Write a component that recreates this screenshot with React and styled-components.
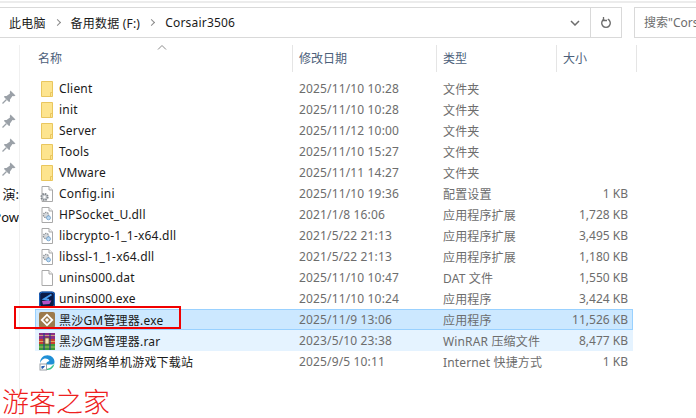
import React from "react";
import styled, { createGlobalStyle } from "styled-components";

const FILES = [
  { icon: "folder", name: "Client", date: "2025/11/10 10:28", type: "文件夹", size: "" },
  { icon: "folder", name: "init", date: "2025/11/10 10:28", type: "文件夹", size: "" },
  { icon: "folder", name: "Server", date: "2025/11/12 10:00", type: "文件夹", size: "" },
  { icon: "folder", name: "Tools", date: "2025/11/10 15:27", type: "文件夹", size: "" },
  { icon: "folder", name: "VMware", date: "2025/11/11 14:27", type: "文件夹", size: "" },
  { icon: "config", name: "Config.ini", date: "2025/11/10 19:36", type: "配置设置", size: "1 KB" },
  { icon: "dll", name: "HPSocket_U.dll", date: "2021/1/8 16:06", type: "应用程序扩展", size: "1,728 KB" },
  { icon: "dll", name: "libcrypto-1_1-x64.dll", date: "2021/5/22 21:13", type: "应用程序扩展", size: "3,495 KB" },
  { icon: "dll", name: "libssl-1_1-x64.dll", date: "2021/5/22 21:13", type: "应用程序扩展", size: "1,180 KB" },
  { icon: "page", name: "unins000.dat", date: "2025/11/10 10:47", type: "DAT 文件", size: "1,550 KB" },
  { icon: "unins", name: "unins000.exe", date: "2025/11/10 10:24", type: "应用程序", size: "3,424 KB" },
  { icon: "game", name: "黑沙GM管理器.exe", date: "2025/11/9 13:06", type: "应用程序", size: "11,526 KB", state: "selected" },
  { icon: "rar", name: "黑沙GM管理器.rar", date: "2023/5/10 23:38", type: "WinRAR 压缩文件", size: "8,477 KB", state: "hover" },
  { icon: "edge", name: "虚游网络单机游戏下载站", date: "2025/9/5 10:11", type: "Internet 快捷方式", size: "1 KB" },
];

const PageIcon = ({ children }) => (
  <svg width="16" height="16" viewBox="0 0 16 16">
    <path d="M3 .5h7l3.500 3.500v11.500h-10.500z" fill="#fff" stroke="#a9a9a9" />
    <path d="M10 .5v3.500h3.500" fill="#f2f2f2" stroke="#a9a9a9" />
    {children}
  </svg>
);

const FileIcon = ({ kind }) => {
  if (kind === "folder") {
    return (
      <svg width="16" height="16" viewBox="0 0 16 16">
        <path d="M2.500.5h11v15h-11z" fill="#fde48e" stroke="#e9c65e" />
        <path d="M11.500 15.500v-4h2" fill="none" stroke="#e9c65e" />
      </svg>
    );
  }
  if (kind === "page") return <PageIcon />;
  if (kind === "config") {
    return (
      <PageIcon>
        <circle cx="5.500" cy="11" r="3.200" fill="#c4c8cc" stroke="#7f8489" strokeWidth="1.800" strokeDasharray="1.500 1" />
        <circle cx="5.500" cy="11" r="1.200" fill="#fff" />
      </PageIcon>
    );
  }
  if (kind === "dll") {
    return (
      <PageIcon>
        <circle cx="7" cy="8" r="2.600" fill="#d5d8db" stroke="#8d9297" strokeWidth="1.300" strokeDasharray="1.400 .8" />
        <circle cx="9.500" cy="10.800" r="2" fill="#bcd9f2" stroke="#6d9fcb" strokeWidth=".8" />
      </PageIcon>
    );
  }
  if (kind === "unins") {
    return (
      <svg width="17" height="17" viewBox="0 0 16 16">
        <rect width="16" height="16" rx="3" fill="#10306e" />
        <rect x=".7" y=".7" width="14.600" height="14.600" rx="2.500" fill="#0b1c48" stroke="#1f6fd0" />
        <path d="M12.500 3 5 7.500l5 1" fill="none" stroke="#4a9ff0" strokeWidth="1.800" />
        <path d="M3 9.500 12.500 9l-2 3.500-6.500.500z" fill="#b452c8" />
      </svg>
    );
  }
  if (kind === "game") {
    return (
      <svg width="16" height="16" viewBox="0 0 16 16">
        <rect width="16" height="16" rx="2" fill="#9c7a4c" />
        <path d="M8 1.500 14.500 8 8 14.500 1.500 8z" fill="#fff" />
        <path d="M8 5 11 8 8 11 5 8z" fill="none" stroke="#9c7a4c" strokeWidth="1.300" />
      </svg>
    );
  }
  if (kind === "rar") {
    return (
      <svg width="16" height="17" viewBox="0 0 16 17">
        <rect x="0" y="0" width="16" height="6" fill="#8a2f86" />
        <rect x="0" y="6" width="16" height="5" fill="#c8402f" />
        <rect x="0" y="11" width="16" height="6" fill="#3c9a3a" />
        <path d="M0 2.500h16M0 8.500h16M0 14h16" stroke="#e8d070" strokeWidth=".7" />
        <path d="M5 0v17M11 0v17" stroke="#2a3f8c" strokeWidth="1.200" />
        <rect x="6" y="5" width="4" height="6" fill="#f4e6b8" stroke="#7a5a20" strokeWidth=".7" />
      </svg>
    );
  }
  return (
    <svg width="17" height="17" viewBox="0 0 16 16">
      <path d="M1 9C1 4 4 .8 8.500 .8c4 0 7 3 7 6.700 0 1.500-1 2.500-2.500 2.500H7c0-2 1.500-3 3.500-3.500C9 4 6.500 3.500 4.500 4.500 2.500 5.500 1.500 7 1 9z" fill="#1f8fd6" />
      <path d="M15.500 8c0 4-3 7.500-7 7.500-1.500 0-3-.5-4-1.500 1 .3 6 1 8.500-2.500.5-.5 2.500-1.500 2.500-3.500z" fill="#35c28a" />
      <rect x="1" y="9.500" width="6.500" height="6" fill="#fff" stroke="#9aa0a6" />
      <path d="M3 14V12h2M3 14l2.500-2.500" fill="none" stroke="#2a5fb0" strokeWidth="1.100" />
    </svg>
  );
};

const PinIcon = () => (
  <svg width="16" height="16" viewBox="0 0 16 16">
    <path d="M9.500 1.500 14.500 6.500 13 7.200 11.500 7 9 10.500 9 12.500 8 13 3 8 3.500 7 5.500 7 9 4.500 8.800 3z" fill="#9ba1a8" />
    <path d="M5.500 10.500 1.500 14.500" stroke="#9ba1a8" strokeWidth="1.300" />
  </svg>
);

const App = () => (
  <>
    <GlobalStyle />
    <Window>
      <TopEdge />
      <AddressRow>
        <AddressBar>
          <Crumbs>
            <Crumb>此电脑</Crumb>
            <CrumbArrow />
            <Crumb>备用数据 (F:)</Crumb>
            <CrumbArrow />
            <Crumb>Corsair3506</Crumb>
          </Crumbs>
          <DropButton>
            <svg width="10" height="6" viewBox="0 0 10 6">
              <path d="M1 1l4 4 4-4" fill="none" stroke="#6d6d6d" strokeWidth="1.500" />
            </svg>
          </DropButton>
          <RefreshButton>
            <svg width="12" height="12" viewBox="0 0 12 12">
              <path d="M7.800 2.200a4.300 4.300 0 1 1-3.600 0" fill="none" stroke="#6d6d6d" strokeWidth="1.400" />
              <path d="M3.500 0v3.500H7" fill="none" stroke="#6d6d6d" strokeWidth="1.300" />
            </svg>
          </RefreshButton>
        </AddressBar>
        <SearchBox>搜索"Corsair3506"</SearchBox>
      </AddressRow>
      <Body>
        <Sidebar>
          <SideItem><PinIcon /></SideItem>
          <SideItem><PinIcon /></SideItem>
          <SideItem><PinIcon /></SideItem>
          <SideItem><PinIcon /></SideItem>
          <SideText>演:</SideText>
          <SideText>Pow</SideText>
        </Sidebar>
        <Listing>
          <HeaderRow>
            <HeaderName>
              名称
              <SortCaret width="10" height="5" viewBox="0 0 10 5">
                <path d="M1 4.500l4-4 4 4" fill="none" stroke="#8a8a8a" />
              </SortCaret>
            </HeaderName>
            <HeaderCell>修改日期</HeaderCell>
            <HeaderCell>类型</HeaderCell>
            <HeaderCell>大小</HeaderCell>
          </HeaderRow>
          <Rows>
            {FILES.map((file) => (
              <Row key={file.name} $state={file.state}>
                <NameCell>
                  <IconSlot><FileIcon kind={file.icon} /></IconSlot>
                  {file.name}
                </NameCell>
                <DetailCell>{file.date}</DetailCell>
                <DetailCell>{file.type}</DetailCell>
                <SizeCell>{file.size}</SizeCell>
              </Row>
            ))}
          </Rows>
        </Listing>
      </Body>
      <RedMark />
      <Watermark>游客之家</Watermark>
    </Window>
  </>
);

const FONT = `"Noto Sans", "Noto Sans CJK SC", sans-serif`;

const GlobalStyle = createGlobalStyle`
  html, body {
    margin: 0;
    background: #fff;
  }
  * {
    box-sizing: border-box;
  }
`;

const Window = styled.div`
  position: relative;
  width: 696px;
  height: 418px;
  overflow: hidden;
  background: #fff;
  font-family: ${FONT};
  font-size: 12px;
`;

const TopEdge = styled.div`
  height: 2px;
  margin-top: 1px;
  background: #ececec;
`;

const AddressRow = styled.div`
  display: flex;
  margin-top: 4px;
  height: 31px;
`;

const AddressBar = styled.div`
  display: flex;
  flex: none;
  width: 622px;
  border: 1px solid #d9d9d9;
  border-left: none;
`;

const Crumbs = styled.div`
  flex: 1;
  display: flex;
  align-items: center;
  padding-left: 9px;
`;

const Crumb = styled.span`
  color: #1a1a1a;
  letter-spacing: 0.2px;
`;

const CrumbArrow = styled.span`
  width: 5px;
  height: 5px;
  margin: 0 11px 0 9px;
  border-top: 1px solid #8a8a8a;
  border-right: 1px solid #8a8a8a;
  transform: rotate(45deg);
`;

const DropButton = styled.div`
  width: 31px;
  display: flex;
  align-items: center;
  justify-content: center;
`;

const RefreshButton = styled.div`
  width: 31px;
  display: flex;
  align-items: center;
  justify-content: center;
  border-left: 1px solid #d9d9d9;
`;

const SearchBox = styled.div`
  width: 120px;
  flex: none;
  margin-left: 12px;
  padding-left: 9px;
  line-height: 29px;
  color: #6d6d6d;
  white-space: nowrap;
  overflow: hidden;
  border: 1px solid #d9d9d9;
`;

const Body = styled.div`
  display: flex;
  margin-top: 7px;
  height: 373px;
`;

const Sidebar = styled.div`
  width: 20px;
  flex: none;
  padding-top: 40px;
  border-right: 1px solid #f0f0f0;
  overflow: hidden;
`;

const SideItem = styled.div`
  height: 24px;
  width: 19px;
  display: flex;
  align-items: center;
  justify-content: flex-end;
  padding-right: 2px;
`;

const SideText = styled(SideItem)`
  padding-right: 0;
  color: #111;
  font-size: 13px;
  white-space: nowrap;
`;

const Listing = styled.div`
  padding-left: 15px;
`;

const HeaderRow = styled.div`
  display: grid;
  grid-template-columns: 257px 144px 120px 81px;
  height: 27px;
`;

const HeaderName = styled.div`
  position: relative;
  padding-left: 3px;
  line-height: 27px;
  color: #4c607a;
`;

const SortCaret = styled.svg`
  position: absolute;
  left: 122px;
  top: 0;
`;

const HeaderCell = styled.div`
  padding-left: 6px;
  line-height: 27px;
  color: #4c607a;
  border-left: 1px solid #e5e5e5;

  &:last-child {
    border-right: 1px solid #e5e5e5;
  }
`;

const Rows = styled.div`
  width: 598px;
  margin-top: 6px;
`;

const Row = styled.div`
  display: grid;
  grid-template-columns: 257px 144px 120px 77px;
  align-items: center;
  height: 21px;
  background: ${(p) => (p.$state === "selected" ? "#cce8ff" : p.$state === "hover" ? "#e5f3ff" : "transparent")};
  box-shadow: ${(p) => (p.$state === "selected" ? "inset 0 0 0 1px #99d1ff" : "none")};
`;

const NameCell = styled.div`
  display: flex;
  align-items: center;
  gap: 4px;
  padding-left: 4px;
  color: #1a1a1a;
  letter-spacing: 0.2px;
  white-space: nowrap;
`;

const IconSlot = styled.span`
  display: flex;
  width: 16px;
  height: 16px;
`;

const DetailCell = styled.div`
  padding-left: 7px;
  color: #6d6d6d;
  letter-spacing: 0.15px;
  white-space: nowrap;
`;

const SizeCell = styled(DetailCell)`
  padding: 0 5px 0 0;
  text-align: right;
  letter-spacing: 0;
`;

const RedMark = styled.div`
  position: absolute;
  left: 14px;
  top: 306px;
  width: 167px;
  height: 23px;
  border: 2px solid #f00000;
`;

const Watermark = styled.div`
  position: absolute;
  left: 2px;
  top: 386px;
  font-family: "Noto Sans CJK SC", serif;
  font-size: 27px;
  font-weight: 300;
  line-height: 30px;
  color: #ee2020;
`;

export default App;
